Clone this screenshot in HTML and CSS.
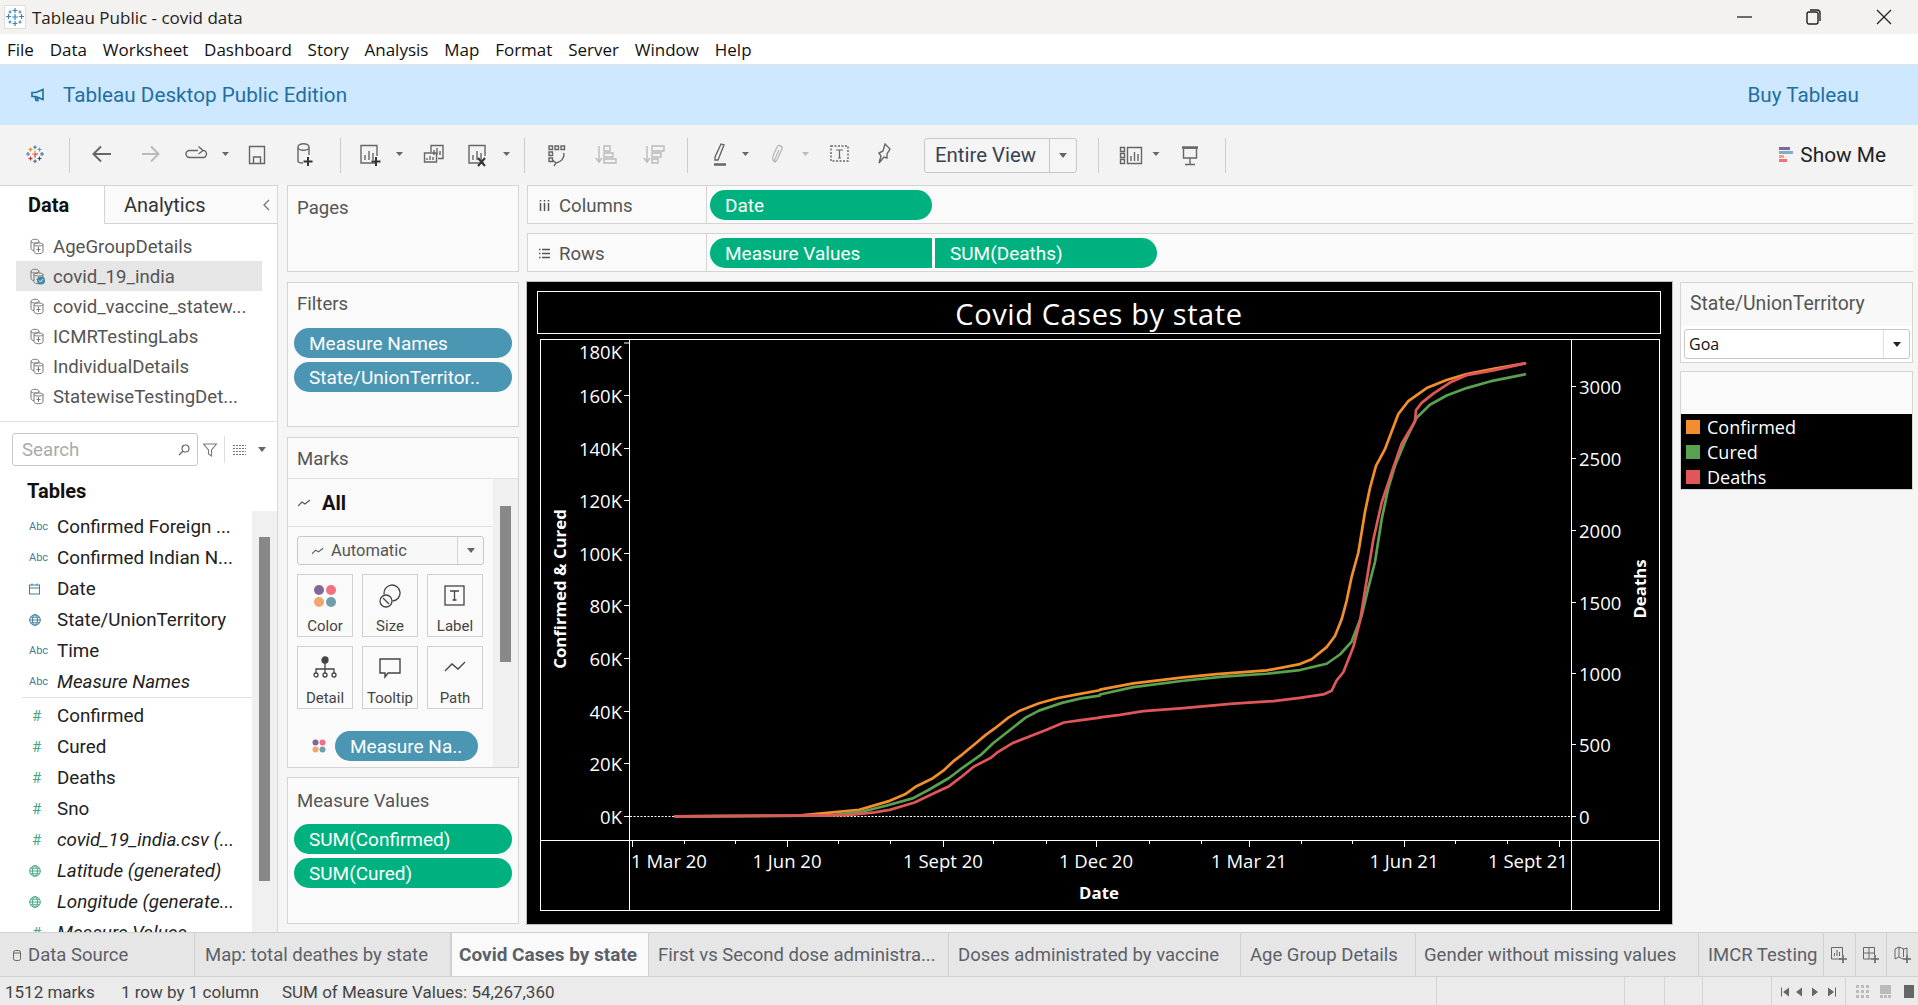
FILE: index.html
```
<!DOCTYPE html>
<html lang="en">
<head>
<meta charset="utf-8">
<title>Tableau Public - covid data</title>
<link rel="stylesheet" href="styles.css">
</head>
<body>
<div class="app">
  <header class="titlebar">
    <div class="appicon">
      <svg width="20" height="20" viewBox="0 0 20 20" fill="none" stroke="#3f86b5" stroke-width="1.2"><path d="M10 1v5M7.500 3.500h5M10 14v5M7.500 16.500h5M3.500 7v5M1 9.500h5M16.500 7v5M14 9.500h5M10 7v6M7 10h6M5 3.500v3M3.500 5h3M15 3.500v3M13.500 5h3M5 13.500v3M3.500 15h3M15 13.500v3M13.500 15h3"/></svg>
    </div>
    <span class="apptitle">Tableau Public - covid data</span>
    <div class="winctl">
      <svg width="16" height="16" viewBox="0 0 16 16" stroke="#222" fill="none" stroke-width="1.3"><path d="M0 8h15"/></svg>
      <svg width="16" height="18" viewBox="0 0 16 18" stroke="#222" fill="none" stroke-width="1.4"><rect x="1" y="4" width="11" height="12" rx="2"/><path d="M4 2h7a3 3 0 0 1 3 3v8"/></svg>
      <svg width="16" height="16" viewBox="0 0 16 16" stroke="#222" fill="none" stroke-width="1.3"><path d="M1 1l14 14M15 1L1 15"/></svg>
    </div>
  </header>
  <nav class="menubar">
    <span>File</span><span>Data</span><span>Worksheet</span><span>Dashboard</span><span>Story</span><span>Analysis</span><span>Map</span><span>Format</span><span>Server</span><span>Window</span><span>Help</span>
  </nav>
  <div class="banner">
    <svg class="megaphone" width="14" height="14" viewBox="0 0 14 14" fill="none" stroke="#1f6f9f" stroke-width="1.6"><path d="M1 4.500h4l7-3v10l-7-3H1zM4 8.500l1 4h2l-1-3.500"/></svg>
    <span class="bannertext">Tableau Desktop Public Edition</span>
    <span class="buy">Buy Tableau</span>
  </div>
  <div class="toolbar">
    <svg class="strip" width="924" height="60" viewBox="0 0 924 60" fill="none" stroke="#666" stroke-width="1.4">
      <g stroke="#ccc" stroke-width="1"><path d="M69.500 13v35M340.500 13v35M524.500 13v35M687.500 13v35"/></g>
      <g stroke-width="1.200">
        <path stroke="#4a86b0" d="M35 20.500v3.500M33.200 22.200h3.600"/>
        <path stroke="#4a86b0" d="M28 27v4M26 29h4"/>
        <path stroke="#4a6f96" d="M42 27v4M40 29h4"/>
        <path stroke="#e8862e" d="M30.500 22.500v4M28.500 24.500h4"/>
        <path stroke="#5b9bc0" d="M39.500 22.500v4M37.500 24.500h4"/>
        <path stroke="#e8862e" d="M35 25.500v3.500M32 29h3"/>
        <path stroke="#c7283c" d="M35 29v3.500M35 29h3"/>
        <path stroke="#c7283c" d="M30.500 31.500v4M28.500 33.500h4"/>
        <path stroke="#33506e" d="M39.500 31.500v4M37.500 33.500h4"/>
        <path stroke="#7a5c8c" d="M35 34.500v3.500M33.200 36.200h3.600"/>
      </g>
      <path stroke-width="2" d="M111 29H94M101 21.500L93.500 29l7.500 7.500"/>
      <path stroke="#bbb" stroke-width="2" d="M142 29h16M151 21.500l7.500 7.500-7.500 7.500"/>
      <path d="M198 25.500h-8.500a3.500 3.500 0 0 0 0 7h13a3.500 3.500 0 0 0 1-7M198.500 21.500l4.500 4-4.500 3.500"/>
      <path fill="#666" stroke="none" d="M222 27h7l-3.500 4zM396 27h7l-3.500 4zM503 27h7l-3.500 4zM742 27h7l-3.500 4z"/>
      <path fill="#bbb" stroke="none" d="M802 27h7l-3.500 4z"/>
      <path d="M249.500 21.500h15v17h-15zM253.500 38v-6h7v6"/>
      <path d="M298 22a5 3 0 0 1 11 0v8M298 22v14a5 2 0 0 0 5 2M298 22a5 3 0 0 0 11 0"/><path stroke="#333" stroke-width="2" d="M308 32v9M303.500 36.500h9"/>
      <path d="M376 38h-15V20.500h16V31M365 35v-5M369 35v-9M373 35v-7"/><path stroke="#333" stroke-width="2" d="M376 32v9M371.500 36.500h9"/>
      <path d="M431 27v-6.500h12v13h-5M434 30v-5M437 30v-7M440 30v-4M424.500 28h12v9h-12zM427 35v-2M430 35v-4M433 35v-3"/>
      <path d="M484 38h-15V20.500h16V31M473 35v-5M477 35v-9M481 35v-7"/><path stroke="#333" stroke-width="2" d="M478 33l7 8M485 33l-7 8"/>
      <path d="M549 21h3.500v3.500H549zM555 21h3.500v3.500H555zM561 21h3.500v3.500H561zM549 27h3.500v3.500H549zM549 33h3.500v3.500H549zM564 28a9 9 0 0 1-8 10M553 35.500l3 2.500-2 3"/>
      <g stroke="#bbb"><path d="M599 21v15M596 33l3 4 3-4M604 21h6v5h-6zM604 28h9v4h-9zM604 34h12v4h-12z"/><path d="M647 21v15M644 33l3 4 3-4M652 21h12v5h-12zM652 28h9v4h-9zM652 34h6v4h-6z"/></g>
      <path d="M715 35h3l6-15-3-1-6 13z"/><path stroke-width="2.500" d="M714 39.500h12"/>
      <path stroke="#bbb" d="M776 37c-3 0-4-3-3-6l4-9c1-3 6-1 5 2l-5 11c-1 2-3 1-2-1l4-9"/>
      <path stroke-dasharray="2 1.500" d="M831 21h17v15h-17z"/><path stroke-width="1.200" d="M836 25h7M839.500 25v8M838 33h3"/>
      <path d="M885 19l5 5-3 5v4l-3-1-5 6 2-7-2-3 4-2z"/>
    </svg>
    <div class="viewbox"><span class="viewlabel">Entire View</span><span class="viewcaret"><i class="caret"></i></span></div>
    <svg class="strip" width="150" height="60" viewBox="0 0 150 60" fill="none" stroke="#666" stroke-width="1.4">
      <path stroke="#ccc" stroke-width="1" d="M21.500 13v35M148.500 13v35"/>
      <path d="M43.500 22.500h4v4h-4zM43.500 28.500h4v4h-4zM43.500 34.500h4v4h-4zM50.500 22.500h14v16h-14zM54 36v-5M57.500 36v-9M61 36v-7"/>
      <path fill="#666" stroke="none" d="M75.500 27h7l-3.500 4z"/>
      <path d="M106.500 23h13v10h-13zM113 33v6M108 39.500h10"/><path stroke-width="2.400" d="M105 22.500h16"/>
    </svg>
    <div class="showme">
      <svg width="14" height="16" viewBox="0 0 14 16"><rect y="0" width="11" height="3" fill="#7d6a98"/><rect y="4" width="14" height="3" fill="#85a9cd"/><rect y="8" width="5" height="3" fill="#f2a66c"/><rect y="12" width="8" height="3" fill="#f2707f"/></svg>
      <span>Show Me</span>
    </div>
  </div>

  <main class="workspace">
    <aside class="leftpane">
      <div class="panetabs">
        <div class="panetab active">Data</div>
        <div class="panetab">Analytics<svg class="chev" width="8" height="12" viewBox="0 0 8 12" fill="none" stroke="#777" stroke-width="1.300"><path d="M7 1L2 6l5 5"/></svg></div>
      </div>
      <ul class="sources">
        <li><svg class="ds" width="15" height="17" viewBox="0 0 15 17"><use href="#dsicon"/></svg>AgeGroupDetails</li>
        <li class="current"><svg class="ds" width="15" height="17" viewBox="0 0 15 17"><use href="#dsicon"/><circle cx="11" cy="12.500" r="4" fill="#3f86a8"/><path d="M9 12.500l1.500 1.500 2.500-3" stroke="#fff" fill="none"/></svg>covid_19_india</li>
        <li><svg class="ds" width="15" height="17" viewBox="0 0 15 17"><use href="#dsicon"/></svg>covid_vaccine_statew...</li>
        <li><svg class="ds" width="15" height="17" viewBox="0 0 15 17"><use href="#dsicon"/></svg>ICMRTestingLabs</li>
        <li><svg class="ds" width="15" height="17" viewBox="0 0 15 17"><use href="#dsicon"/></svg>IndividualDetails</li>
        <li><svg class="ds" width="15" height="17" viewBox="0 0 15 17"><use href="#dsicon"/></svg>StatewiseTestingDet...</li>
      </ul>
      <div class="searchrow">
        <div class="searchbox"><span>Search</span><svg width="12" height="12" viewBox="0 0 12 12" fill="none" stroke="#666" stroke-width="1.200"><circle cx="7.500" cy="4.500" r="3.500"/><path d="M5 7l-4 4"/></svg></div>
        <svg class="funnel" width="14" height="14" viewBox="0 0 14 14" fill="none" stroke="#777" stroke-width="1.100"><path d="M.5 1h13L8.500 7v6l-3-2V7z"/></svg>
        <i class="vsep"></i>
        <svg class="gridico" width="13" height="10" viewBox="0 0 13 10" stroke="#777" stroke-width="1" stroke-dasharray="2 1"><path d="M0 .5h13M0 3.500h13M0 6.500h13M0 9.500h13"/></svg>
        <i class="caret"></i>
      </div>
      <h2 class="tablesh">Tables</h2>
      <div class="fieldarea">
        <ul class="fields">
          <li><span class="ficon abc">Abc</span>Confirmed Foreign ...</li>
          <li><span class="ficon abc">Abc</span>Confirmed Indian N...</li>
          <li><span class="ficon"><svg width="12" height="12" viewBox="0 0 12 12" fill="none" stroke="#3f7f9c" stroke-width="1"><rect x=".5" y="2" width="10" height="9"/><path d="M.5 5h10M3 .5v2M8 .5v2"/></svg></span>Date</li>
          <li><span class="ficon"><svg width="12" height="12" viewBox="0 0 12 12"><use href="#globe" stroke="#3f7f9c"/></svg></span>State/UnionTerritory</li>
          <li><span class="ficon abc">Abc</span>Time</li>
          <li class="calc"><span class="ficon abc">Abc</span>Measure Names</li>
          <li class="fdivider"></li>
          <li><span class="ficon num">#</span>Confirmed</li>
          <li><span class="ficon num">#</span>Cured</li>
          <li><span class="ficon num">#</span>Deaths</li>
          <li><span class="ficon num">#</span>Sno</li>
          <li class="calc"><span class="ficon num">#</span>covid_19_india.csv (...</li>
          <li class="calc"><span class="ficon"><svg width="12" height="12" viewBox="0 0 12 12"><use href="#globe" stroke="#4aa583"/></svg></span>Latitude (generated)</li>
          <li class="calc"><span class="ficon"><svg width="12" height="12" viewBox="0 0 12 12"><use href="#globe" stroke="#4aa583"/></svg></span>Longitude (generate...</li>
          <li class="calc"><span class="ficon num">#</span>Measure Values</li>
        </ul>
        <div class="scrolltrack fieldscroll"><i class="thumb"></i></div>
      </div>
    </aside>

    <section class="cards">
      <div class="card pages"><h3>Pages</h3></div>
      <div class="card filters">
        <h3>Filters</h3>
        <div class="pill blue">Measure Names</div>
        <div class="pill blue">State/UnionTerritor..</div>
      </div>
      <div class="card marks">
        <h3 class="markshead">Marks</h3>
        <div class="marksbody">
          <div class="markscontent">
            <div class="allrow"><svg width="13" height="8" viewBox="0 0 13 8" fill="none" stroke="#555" stroke-width="1.100"><path d="M0 7l4-4 3 2 5-4"/></svg><b>All</b></div>
            <div class="marktype">
              <span class="mt-label"><svg width="12" height="8" viewBox="0 0 13 8" fill="none" stroke="#555" stroke-width="1.100"><path d="M0 7l4-4 3 2 5-4"/></svg>Automatic</span>
              <span class="mt-caret"><i class="caret"></i></span>
            </div>
            <div class="markgrid">
              <div class="markbtn"><svg width="24" height="24" viewBox="0 0 24 24"><circle cx="6" cy="6" r="5" fill="#7d6a98"/><circle cx="18" cy="6" r="5" fill="#f2707f"/><circle cx="6" cy="18" r="5" fill="#f2a66c"/><circle cx="18" cy="18" r="5" fill="#6f9fa8"/></svg><span>Color</span></div>
              <div class="markbtn"><svg width="24" height="24" viewBox="0 0 24 24" fill="none" stroke="#444" stroke-width="1.300"><path d="M6.200 10.500A8 8 0 1 1 14.500 17"/><circle cx="8" cy="17" r="6"/><path d="M5 14l6 6"/></svg><span>Size</span></div>
              <div class="markbtn"><svg width="24" height="24" viewBox="0 0 24 24" fill="none" stroke="#444" stroke-width="1.300"><rect x="2" y="2" width="19" height="19"/><path d="M7 7h9M11.500 7v9M9.500 16h4"/></svg><span>Label</span></div>
              <div class="markbtn"><svg width="24" height="24" viewBox="0 0 24 24" fill="none" stroke="#444" stroke-width="1.300"><circle cx="12" cy="4" r="3" fill="#444"/><path d="M12 7v6M3 17v-4h18v4M12 13v4"/><circle cx="3" cy="19" r="2"/><circle cx="12" cy="19" r="2"/><circle cx="21" cy="19" r="2"/></svg><span>Detail</span></div>
              <div class="markbtn"><svg width="24" height="24" viewBox="0 0 24 24" fill="none" stroke="#444" stroke-width="1.400"><path d="M2 3h20v14H10l-3 4v-4H2z"/></svg><span>Tooltip</span></div>
              <div class="markbtn"><svg width="24" height="24" viewBox="0 0 24 24" fill="none" stroke="#444" stroke-width="1.300"><path d="M2 15l7-7 6 5 7-7"/></svg><span>Path</span></div>
            </div>
            <div class="markpillrow">
              <svg width="14" height="14" viewBox="0 0 14 14"><circle cx="3.500" cy="3.500" r="3" fill="#7d6a98"/><circle cx="10.500" cy="3.500" r="3" fill="#f2707f"/><circle cx="3.500" cy="10.500" r="3" fill="#f2a66c"/><circle cx="10.500" cy="10.500" r="3" fill="#6f9fa8"/></svg>
              <div class="pill blue short">Measure Na..</div>
            </div>
          </div>
          <div class="scrolltrack markscroll"><i class="thumb"></i></div>
        </div>
      </div>
      <div class="card mvalues">
        <h3>Measure Values</h3>
        <div class="pill green">SUM(Confirmed)</div>
        <div class="pill green">SUM(Cured)</div>
      </div>
    </section>

    <section class="stage">
      <div class="shelf"><div class="shelflabel"><svg width="11" height="11" viewBox="0 0 11 11" stroke="#555" stroke-width="1.500"><path d="M1.500 3v8M5.500 3v8M9.500 3v8M1.500 0v1.500M5.500 0v1.500M9.500 0v1.500"/></svg>Columns</div><div class="shelfpills"><div class="pill green shelfpill">Date</div></div></div>
      <div class="shelf"><div class="shelflabel"><svg width="11" height="11" viewBox="0 0 11 11" stroke="#555" stroke-width="1.500"><path d="M3 1.500h8M3 5.500h8M3 9.500h8M0 1.500h1.500M0 5.500h1.500M0 9.500h1.500"/></svg>Rows</div><div class="shelfpills"><div class="pill green shelfpill">Measure Values</div><div class="pill green shelfpill second">SUM(Deaths)</div></div></div>
      <div class="vizrow">
        <div class="viz">
          <svg class="chart" width="1145" height="642" viewBox="527 282 1145 642" fill="none">
            <g stroke="#fff" stroke-width="1">
              <rect x="537.500" y="291.500" width="1123" height="42"/>
              <rect x="540.500" y="339.500" width="1119" height="571"/>
              <path d="M629.500 340v571M1571.500 340v571M541 840.500h1118"/>
              <path d="M624 343h5M624 395.500h5M624 448.500h5M624 500.500h5M624 553.500h5M624 605.500h5M624 658.500h5M624 711.500h5M624 763.500h5M624 816.500h5"/>
              <path d="M1572 386.500h4M1572 458.500h4M1572 530.500h4M1572 602.500h4M1572 673.500h4M1572 744.500h4M1572 816.500h4"/>
              <path d="M632.500 841v6M787.500 841v6M943.500 841v6M1096.500 841v6M1249.500 841v6M1404.500 841v6M1559.500 841v6"/>
              <path d="M684.500 841v3M735.500 841v3M838.500 841v3M890.500 841v3M993.500 841v3M1046.500 841v3M1149.500 841v3M1201.500 841v3M1301.500 841v3M1352.500 841v3M1455.500 841v3M1507.500 841v3"/>
              <path stroke-dasharray="2 1.500" d="M630 816.500h941"/>
            </g>
            <g class="series" stroke="#f28e2b">
              <polyline transform="translate(530 280) scale(.3827 .4082)" vector-effect="non-scaling-stroke" points="380,1314 700,1312 860,1298 940,1276 980,1260 1010,1240 1050,1222 1080,1202 1105,1180 1130,1162 1165,1135 1190,1115 1215,1098 1250,1072 1280,1055 1330,1037 1380,1024 1430,1015 1489,1005"/>
              <polyline transform="translate(1100 340) scale(.3333 .37)" vector-effect="non-scaling-stroke" points="0,945 100,928 250,912 350,903 500,893 600,876 635,863 680,830 705,800 725,755 740,705 755,640 775,575 795,465 810,400 828,340 855,295 895,200 925,165 980,130 1040,108 1100,92 1180,78 1275,63"/>
            </g>
            <g class="series" stroke="#59a14f">
              <polyline transform="translate(530 280) scale(.3827 .4082)" vector-effect="non-scaling-stroke" points="380,1314 780,1312 870,1302 930,1288 1000,1270 1040,1250 1095,1220 1130,1195 1180,1162 1210,1135 1260,1098 1295,1072 1330,1055 1390,1036 1440,1025 1489,1018"/>
              <polyline transform="translate(1100 340) scale(.3333 .37)" vector-effect="non-scaling-stroke" points="0,958 100,938 250,921 370,910 500,902 600,892 680,875 720,850 755,815 785,745 805,670 825,600 845,485 865,400 885,340 915,275 950,210 990,175 1040,150 1100,130 1170,112 1275,93"/>
            </g>
            <g class="series" stroke="#e15759">
              <polyline transform="translate(530 280) scale(.3827 .4082)" vector-effect="non-scaling-stroke" points="380,1314 830,1311 900,1304 940,1298 1005,1280 1050,1260 1095,1240 1130,1215 1160,1192 1205,1170 1220,1158 1260,1135 1300,1120 1350,1102 1395,1084 1440,1078 1489,1072"/>
              <polyline transform="translate(1100 340) scale(.3333 .37)" vector-effect="non-scaling-stroke" points="0,1020 60,1013 130,1003 250,995 400,983 520,976 600,967 670,958 695,948 710,920 730,898 760,830 780,760 800,650 820,540 845,440 880,345 905,280 925,250 945,220 948,190 965,170 1000,145 1050,115 1100,95 1180,82 1275,63"/>
            </g>
            <text class="ctitle" x="1099" y="325" text-anchor="middle">Covid Cases by state</text>
            <g class="axis" text-anchor="end">
              <text x="622" y="359">180K</text><text x="622" y="403">160K</text><text x="622" y="456">140K</text><text x="622" y="508">120K</text><text x="622" y="561">100K</text><text x="622" y="613">80K</text><text x="622" y="666">60K</text><text x="622" y="719">40K</text><text x="622" y="771">20K</text><text x="622" y="824">0K</text>
            </g>
            <g class="axis">
              <text x="1579" y="394">3000</text><text x="1579" y="466">2500</text><text x="1579" y="538">2000</text><text x="1579" y="610">1500</text><text x="1579" y="681">1000</text><text x="1579" y="752">500</text><text x="1579" y="824">0</text>
            </g>
            <g class="axis" text-anchor="middle">
              <text x="669" y="868">1 Mar 20</text><text x="787" y="868">1 Jun 20</text><text x="943" y="868">1 Sept 20</text><text x="1096" y="868">1 Dec 20</text><text x="1249" y="868">1 Mar 21</text><text x="1404" y="868">1 Jun 21</text><text x="1528" y="868">1 Sept 21</text>
            </g>
            <text class="axtitle" x="1099" y="899" text-anchor="middle">Date</text>
            <text class="axtitle" text-anchor="middle" transform="translate(566 589) rotate(-90)">Confirmed &amp; Cured</text>
            <text class="axtitle" text-anchor="middle" transform="translate(1646 589) rotate(-90)">Deaths</text>
          </svg>
        </div>
        <div class="sidecol">
          <div class="sidecard statecard">
            <h3>State/UnionTerritory</h3>
            <div class="statebody">
              <div class="select"><span class="selval">Goa</span><span class="selcaret"><i class="caret dark"></i></span></div>
            </div>
          </div>
          <div class="sidecard legend">
            <div class="legendtop"></div>
            <ul class="legendlist">
              <li><i class="sw orange"></i>Confirmed</li>
              <li><i class="sw grn"></i>Cured</li>
              <li><i class="sw red"></i>Deaths</li>
            </ul>
          </div>
        </div>
      </div>
    </section>
  </main>

  <div class="tabbar">
    <div class="tab t-ds"><svg width="8" height="11" viewBox="0 0 8 11" fill="none" stroke="#666"><rect x=".5" y=".5" width="7" height="10" rx="2"/><path d="M.5 3h7"/></svg>Data Source</div>
    <div class="tab t-map">Map: total deathes by state</div>
    <div class="tab t-cur">Covid Cases by state</div>
    <div class="tab t-first">First vs Second dose administra...</div>
    <div class="tab t-doses">Doses administrated by vaccine</div>
    <div class="tab t-age">Age Group Details</div>
    <div class="tab t-gender">Gender without missing values</div>
    <div class="tab t-imcr">IMCR Testing</div>
    <div class="tabadd"><svg width="18" height="18" viewBox="0 0 18 18" fill="none" stroke="#666"><path d="M11 13H1.500V1.500h11V9M4.500 10V7M7 10V4M9.500 10V6"/><path stroke-width="1.600" d="M13 9v8M9 13h8"/></svg></div>
    <div class="tabadd"><svg width="18" height="18" viewBox="0 0 18 18" fill="none" stroke="#666"><path d="M9 13H1.500V1.500h11V9M7 1.500V13M1.500 7h11"/><path stroke-width="1.600" d="M13 9v8M9 13h8"/></svg></div>
    <div class="tabadd"><svg width="18" height="18" viewBox="0 0 18 18" fill="none" stroke="#666"><path d="M9 13L5 11 1 13V3l4-2 5 2 3-1v7M5 1v10M9.500 3v8"/><path stroke-width="1.600" d="M13 9v8M9 13h8"/></svg></div>
  </div>
  <footer class="statusbar">
    <div class="st st-main"><span class="s1">1512 marks</span><span class="s2">1 row by 1 column</span><span class="s3">SUM of Measure Values: 54,267,360</span></div>
    <div class="st w188"></div>
    <div class="st w40"></div>
    <div class="st w38"></div>
    <div class="st w69"></div>
    <div class="st w74">
      <svg width="56" height="12" viewBox="0 0 56 12" fill="#666" stroke="#666"><path stroke-width="1" d="M.5 1.500v9"/><path stroke="none" d="M8 1.500v9L2 6zM21 1.500v9L15 6zM31 1.500v9L37 6zM47 1.500v9L53 6z"/><path stroke-width="1" d="M54.500 1.500v9"/></svg>
    </div>
    <div class="st w72">
      <svg width="62" height="14" viewBox="0 0 62 14"><g fill="#bbb"><path d="M0 0h3v3H0zM5 0h3v3H5zM10 0h3v3h-3zM0 5h3v3H0zM5 5h3v3H5zM10 5h3v3h-3zM0 10h3v3H0zM5 10h3v3H5zM10 10h3v3h-3z"/><path d="M24 0h11v9H24zM24 10h3v3h-3zM28 10h3v3h-3zM32 10h3v3h-3z"/></g><rect x="48" y="0" width="10" height="13" fill="#666"/></svg>
    </div>
  </footer>
</div>
<svg class="defs" width="0" height="0">
  <defs>
    <g id="dsicon" fill="none" stroke="#777" stroke-width="1"><path d="M1 3.500C1 .5 9 .5 9 3.500v1M1 3.500v7c0 1.500 2 2 3 2M1 3.500c0 2 8 2 8 0M4 6.500C4 4.500 13 4.500 13 6.500v7c0 3-9 3-9 0zM4 6.500c0 2 9 2 9 0M8.500 9v5M6.500 11.500h4"/></g>
    <g id="globe" fill="none" stroke-width="1"><circle cx="6" cy="6" r="5.300"/><ellipse cx="6" cy="6" rx="2.500" ry="5.300"/><path d="M.7 6h10.600M1.500 3.200h9M1.500 8.800h9"/></g>
  </defs>
</svg>
</body>
</html>
```

FILE: styles.css
```
* { box-sizing: border-box; }
html, body { margin: 0; padding: 0; }
body { width: 1918px; height: 1005px; overflow: hidden; background: #f5f5f5; font-family: Roboto, "Liberation Sans", sans-serif; color: #333; }
ul { list-style: none; margin: 0; padding: 0; }
h2, h3 { margin: 0; font-weight: 400; }
.defs { position: absolute; }
.app { display: flex; flex-direction: column; height: 1005px; }

.titlebar { height: 34px; background: #f3f2f1; display: flex; align-items: center; padding-left: 4px; font-family: "Open Sans", sans-serif; font-size: 17px; color: #222; }
.appicon { width: 22px; height: 24px; background: #fff; border: 1px solid #ddd; display: flex; align-items: center; justify-content: center; margin-right: 6px; }
.winctl { margin-left: auto; display: flex; align-items: center; }
.winctl svg:nth-child(1) { margin-right: 53px; }
.winctl svg:nth-child(2) { margin-right: 54px; }
.winctl svg:nth-child(3) { margin-right: 26px; }

.menubar { height: 31px; background: #fff; border-bottom: 1px solid #e4e4e4; display: flex; align-items: center; padding: 1px 0 0 7px; font-family: "Open Sans", sans-serif; font-size: 17px; color: #111; }
.menubar span { margin-right: 15.800px; }

.banner { height: 60px; background: #cde8ff; display: flex; align-items: center; padding: 0 59px 0 31px; color: #1f6f9f; font-size: 20.700px; }
.megaphone { margin-right: 18px; }
.buy { margin-left: auto; }

.toolbar { height: 60px; background: #f3f3f3; display: flex; align-items: center; }
.strip { flex: none; display: block; }
.viewbox { width: 153px; height: 35px; border: 1px solid #c8c8c8; border-radius: 3px; display: flex; align-items: center; flex: none; font-size: 20.400px; color: #3b4250; background: #f5f5f5; }
.viewlabel { flex: 1; padding-left: 10px; }
.viewcaret { width: 27px; height: 100%; border-left: 1px solid #c8c8c8; display: flex; align-items: center; justify-content: center; }
.caret { display: inline-block; width: 0; height: 0; border-left: 4px solid transparent; border-right: 4px solid transparent; border-top: 5px solid #666; }
.caret.dark { border-top-color: #222; }
.showme { margin-left: auto; display: flex; align-items: center; gap: 7px; padding-right: 32px; font-size: 20.800px; color: #222; }

.workspace { flex: 1; min-height: 0; display: grid; grid-template-columns: 278px 232px 1fr; column-gap: 9px; padding-right: 5px; }
.workspace > .stage { margin-left: -1px; }

.leftpane { background: #fff; border-right: 1px solid #d8d8d8; display: flex; flex-direction: column; min-height: 0; overflow: hidden; }
.panetabs { display: flex; height: 39px; flex: none; }
.panetab { font-size: 20px; display: flex; align-items: center; border-top: 1px solid #d4d4d4; }
.panetab.active { width: 104px; font-weight: 700; padding-left: 28px; color: #111; }
.panetab:not(.active) { flex: 1; padding-left: 19px; background: #fafafa; border-left: 1px solid #d4d4d4; border-bottom: 1px solid #d4d4d4; position: relative; }
.chev { position: absolute; right: 7px; top: 13px; }
.sources { padding: 7px 0 10px 16px; border-bottom: 1px solid #e2e2e2; flex: none; width: 100%; }
.sources li { height: 30px; width: 246px; display: flex; align-items: center; font-size: 18.600px; color: #555; padding: 1px 0 0 14px; white-space: nowrap; }
.sources li.current { background: #e6e6e6; }
.ds { margin-right: 8px; flex: none; }
.searchrow { display: flex; align-items: center; margin-top: 11px; padding-left: 12px; height: 33px; flex: none; }
.searchbox { width: 186px; height: 33px; border: 1px solid #c8c8c8; border-radius: 3px; display: flex; align-items: center; justify-content: space-between; padding: 0 7px 0 9px; font-size: 18.700px; color: #aaa; }
.funnel { margin-left: 5px; }
.vsep { width: 1px; height: 27px; background: #ddd; margin: 0 8px 0 7px; }
.gridico { margin-right: 12px; }
.tablesh { font-size: 20px; font-weight: 700; color: #111; padding-left: 27px; height: 28px; line-height: 30px; margin-top: 10px; flex: none; }
.fieldarea { flex: 1; min-height: 0; display: flex; margin-top: 7px; overflow: hidden; }
.fields { flex: 1; padding-left: 22px; }
.fields li { height: 31px; display: flex; align-items: center; font-size: 18.800px; color: #222; white-space: nowrap; }
.fields li.calc { font-style: italic; }
.fields li.fdivider { height: 1px; background: #e2e2e2; margin-bottom: 2px; margin-top: 0; }
.ficon { width: 35px; flex: none; display: flex; align-items: center; padding-left: 7px; font-style: normal; }
.abc { font-size: 11px; color: #3f7f9c; padding-left: 7px; }
.num { font-size: 15px; color: #4aa583; padding-left: 10px; }
.scrolltrack { width: 25px; background: #f0f0f0; flex: none; padding-left: 7px; }
.thumb { display: block; width: 11px; background: #888; }
.fieldscroll .thumb { height: 344px; margin-top: 26px; }

.cards { display: flex; flex-direction: column; padding-bottom: 8px; }
.card { background: #fafafa; border: 1px solid #d4d4d4; flex: none; }
.card h3 { font-size: 18.600px; color: #555; padding-left: 9px; }
.pages { height: 87px; padding-top: 11px; margin-bottom: 10px; }
.filters { height: 145px; padding-top: 8px; margin-bottom: 10px; }
.filters h3 { height: 37px; line-height: 27px; }
.pill { height: 30px; line-height: 31px; border-radius: 15px; color: #fff; font-size: 19px; padding-left: 15px; white-space: nowrap; }
.card > .pill { margin: 0 6px 4px 6px; }
.blue { background: #4a96b3; }
.green { background: #00b180; }
.marks { height: 331px; margin-bottom: 9px; display: flex; flex-direction: column; }
.markshead { height: 41px; line-height: 42px; border-bottom: 1px solid #e2e2e2; flex: none; }
.marksbody { flex: 1; display: flex; min-height: 0; }
.markscontent { flex: 1; min-width: 0; }
.allrow { height: 48px; border-bottom: 1px solid #e2e2e2; display: flex; align-items: center; padding: 1px 0 0 10px; gap: 11px; font-size: 20px; color: #111; }
.marktype { height: 29px; margin: 9px 9px 0 9px; border: 1px solid #c8c8c8; border-radius: 3px; display: flex; align-items: center; background: #f8f8f8; font-size: 16.500px; color: #555; }
.mt-label { flex: 1; display: flex; align-items: center; gap: 7px; padding-left: 14px; }
.mt-caret { width: 26px; height: 100%; border-left: 1px solid #d4d4d4; display: flex; align-items: center; justify-content: center; }
.markgrid { display: grid; grid-template-columns: repeat(3, 56px); grid-auto-rows: 63px; gap: 9px; margin: 9px 0 0 9px; }
.markbtn { border: 1px solid #d0d0d0; display: flex; flex-direction: column; align-items: center; padding-top: 9px; font-size: 15px; color: #444; background: #fafafa; }
.markbtn span { margin-top: 9px; }
.markpillrow { display: flex; align-items: center; gap: 9px; margin: 22px 0 0 24px; }
.short { width: 143px; }
.markscroll .thumb { height: 156px; margin-top: 27px; }
.mvalues { height: 147px; padding-top: 9px; }
.mvalues h3 { height: 37px; line-height: 28px; }

.stage { display: flex; flex-direction: column; min-width: 0; }
.shelf { height: 39px; background: #fafafa; border: 1px solid #d4d4d4; border-right: none; border-left: 1px solid #d4d4d4; display: flex; margin-bottom: 9px; flex: none; }
.shelflabel { width: 179px; border-right: 1px solid #d4d4d4; display: flex; align-items: center; gap: 9px; padding: 2px 0 0 11px; font-size: 18.600px; color: #555; }
.shelfpills { display: flex; gap: 3px; padding: 4px 0 0 3px; }
.shelfpill { width: 222px; }
.shelfpills .shelfpill:first-child:not(:last-child) { border-radius: 15px 0 0 15px; }
.shelfpills .second { border-radius: 0 15px 15px 0; }
.vizrow { flex: 1; display: flex; min-height: 0; gap: 8px; padding-bottom: 8px; margin-top: 1px; }
.viz { width: 1145px; background: #000; flex: none; outline: 1px solid #bdbdbd; }
.chart { display: block; }
.series polyline { stroke-width: 2.700; stroke-linejoin: round; stroke-linecap: round; }
.chart text { fill: #fff; stroke: none; font-family: "Open Sans", sans-serif; }
.ctitle { font-size: 29px; letter-spacing: .6px; }
.axis { font-size: 18.500px; }
.chart .axtitle { font-size: 16.800px; font-weight: 700; }
.sidecol { flex: 1; min-width: 0; display: flex; flex-direction: column; gap: 8px; }
.sidecard { border: 1px solid #d4d4d4; background: #fafafa; }
.statecard { height: 81px; display: flex; flex-direction: column; }
.statecard h3 { font-size: 19.400px; color: #555; height: 43px; line-height: 42px; padding-left: 9px; background: #f8f8f8; }
.statebody { background: #fff; flex: 1; padding: 3px 2px 0 3px; }
.select { height: 30px; border: 1px solid #c8c8c8; border-radius: 3px; display: flex; align-items: center; background: #fff; font-size: 16px; color: #111; font-family: "Open Sans", sans-serif; }
.selval { flex: 1; padding-left: 4px; }
.selcaret { width: 26px; height: 100%; border-left: 1px solid #e2e2e2; display: flex; align-items: center; justify-content: center; }
.legend { height: 119px; display: flex; flex-direction: column; }
.legendtop { height: 42px; flex: none; }
.legendlist { flex: 1; background: #000; }
.legendlist li { height: 25px; display: flex; align-items: center; color: #fff; font-family: "Open Sans", sans-serif; font-size: 18px; padding: 0 0 0 5px; gap: 7px; }
.sw { width: 14px; height: 14px; display: block; }
.orange { background: #f28e2b; }
.grn { background: #59a14f; }
.red { background: #e15759; }

.tabbar { height: 45px; flex: none; display: flex; background: #e6e6e6; border-top: 1px solid #d0d0d0; border-bottom: 1px solid #d0d0d0; font-size: 18.500px; color: #5c6068; }
.tab { display: flex; align-items: center; border-right: 1px solid #d0d0d0; white-space: nowrap; overflow: hidden; flex: none; padding-top: 1px; }
.t-ds { width: 195px; padding-left: 13px; gap: 7px; }
.t-map { width: 256px; padding-left: 10px; }
.t-cur { width: 198px; padding-left: 7px; background: #fafafa; font-weight: 700; font-size: 19px; border-left: 1px solid #d0d0d0; padding-top: 0; }
.t-first { width: 300px; padding-left: 9px; }
.t-doses { width: 292px; padding-left: 9px; }
.t-age { width: 175px; padding-left: 9px; }
.t-gender { width: 283px; padding-left: 8px; }
.t-imcr { width: 125px; padding-left: 9px; }
.tabadd { width: 31.500px; flex: none; border-right: 1px solid #d0d0d0; display: flex; align-items: center; justify-content: center; }
.tabadd:last-child { border-right: none; }

.statusbar { height: 28px; flex: none; background: #ebebeb; display: flex; font-size: 17px; color: #444; }
.st { height: 100%; flex: none; border-right: 1px solid #d4d4d4; display: flex; align-items: center; padding-top: 1px; }
.st-main { width: 1437px; }
.s1 { margin-left: 5px; width: 116px; }
.s2 { width: 161px; }
.w188 { width: 188px; }
.w40 { width: 40px; }
.w38 { width: 38px; }
.w69 { width: 69px; }
.w74 { width: 74px; padding-left: 9px; }
.w72 { width: 72px; padding-left: 10px; border-right: none; }
```
